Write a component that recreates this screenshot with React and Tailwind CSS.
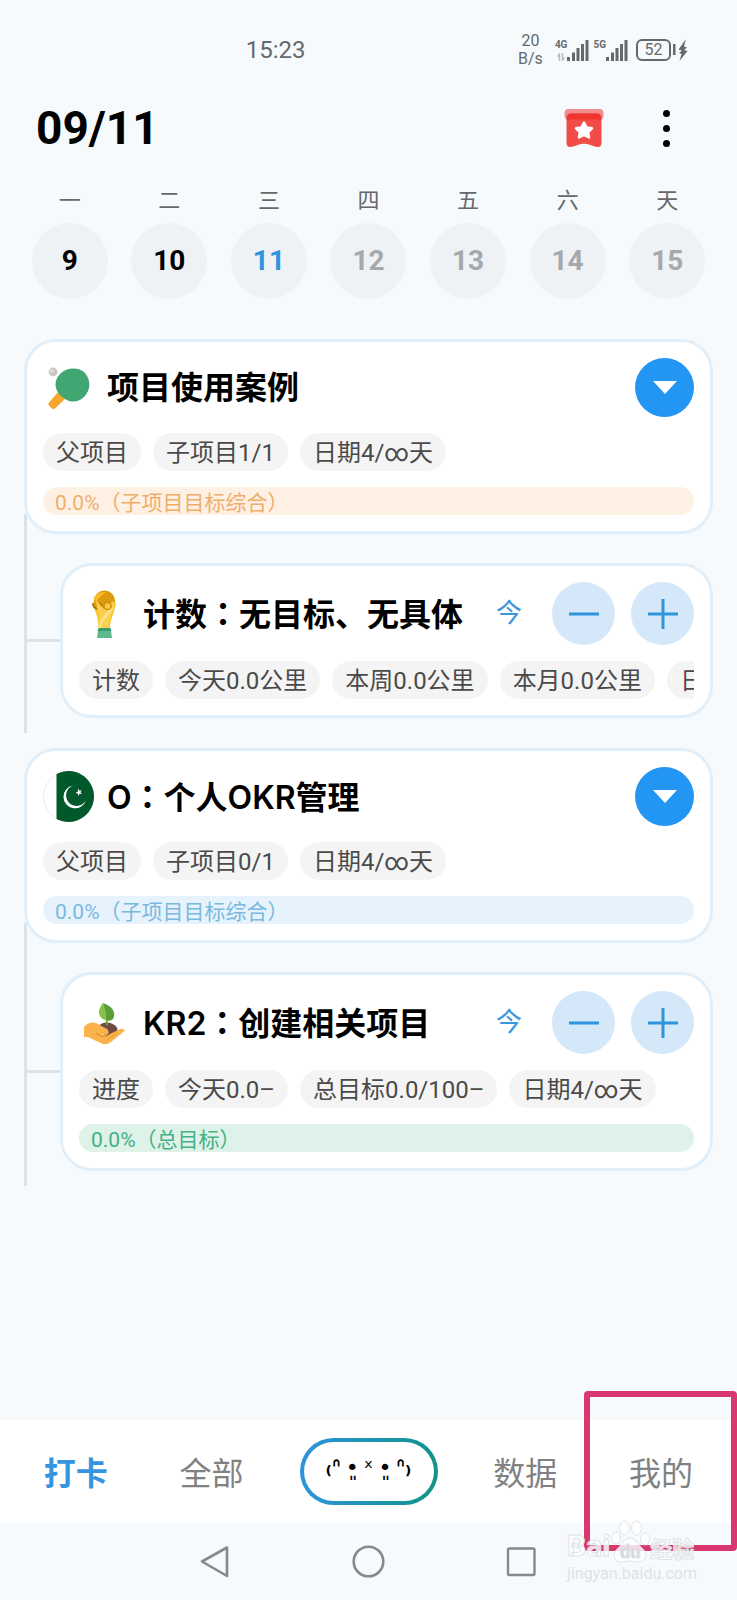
import React from "react";

const WEEK = [
  { label: "一", day: 9, tone: "text-black" },
  { label: "二", day: 10, tone: "text-black" },
  { label: "三", day: 11, tone: "text-[#2f93de]" },
  { label: "四", day: 12, tone: "text-[#a6a9ac]" },
  { label: "五", day: 13, tone: "text-[#a6a9ac]" },
  { label: "六", day: 14, tone: "text-[#a6a9ac]" },
  { label: "天", day: 15, tone: "text-[#a6a9ac]" },
];

const GROUPS = [
  {
    parent: {
      icon: <PaddleIcon />,
      title: "项目使用案例",
      tags: ["父项目", "子项目1/1", "日期4/∞天"],
      progress: { text: "0.0%（子项目目标综合）", style: "bg-[#fef1e4] text-[#eeae6b]" },
    },
    child: {
      icon: <TrophyIcon />,
      title: "计数：无目标、无具体",
      tags: ["计数", "今天0.0公里", "本周0.0公里", "本月0.0公里", "日期4/∞天"],
    },
  },
  {
    parent: {
      icon: <FlagIcon />,
      title: "O：个人OKR管理",
      tags: ["父项目", "子项目0/1", "日期4/∞天"],
      progress: { text: "0.0%（子项目目标综合）", style: "bg-[#e6f3fd] text-[#7ab9de]" },
    },
    child: {
      icon: <SproutIcon />,
      title: "KR2：创建相关项目",
      tags: ["进度", "今天0.0–", "总目标0.0/100–", "日期4/∞天"],
      progress: { text: "0.0%（总目标）", style: "bg-[#dff2e9] text-[#43b184]" },
    },
  },
];

function PaddleIcon() {
  return (
    <svg viewBox="0 0 51 51" className="w-full h-full" aria-hidden="true">
      <circle cx="10" cy="10" r="4.400" fill="#c9c4c2" />
      <circle cx="9" cy="9" r="2.200" fill="#dedad8" />
      <path d="M16 29l7 7-11 10.500q-1.500 1.500-3 0l-3-3q-1.500-1.500 0-3z" fill="#f6a62f" />
      <path d="M17 33C11 27 11 18 17 12C24 5 36 5 42 11C48 18 48 28 41 35C36 40 28 41 23 37.500C21 36 19 35 17 33z" fill="#42a673" />
    </svg>
  );
}

function TrophyIcon() {
  return (
    <svg viewBox="0 0 51 51" className="w-full h-full" aria-hidden="true">
      <path d="M19 43h13l1 7H18z" fill="#5dbb8b" />
      <path d="M18.500 43h14l-1-3h-12z" fill="#3c9b6e" />
      <path d="M14 17C17 26 20 30 19 40H31C31 32 35 26 37 16L34 9H16z" fill="#fcc62d" />
      <circle cx="25.500" cy="13" r="10.500" fill="#dd9a0c" />
      <path d="M15 10Q18 3 27 4Q22 7 17 14z" fill="#f9bd25" />
      <path d="M14 15q0 5 5 6l4-1-2-5" fill="none" stroke="#a8760c" strokeWidth="2" />
      <path d="M17 12l8 9 9-8 2 3c-2 8-6 12-6 24H21c1-10 0-14-3-20z" fill="#fbcf52" />
      <path d="M35 19c-3 7-11 11-13 21h-3c1-10 8-12 11-19z" fill="#fde28b" />
      <circle cx="28.500" cy="18" r="3.600" fill="#fbc93b" stroke="#c98d12" strokeWidth="1.500" />
    </svg>
  );
}

function FlagIcon() {
  return (
    <svg viewBox="0 0 51 51" className="w-full h-full" aria-hidden="true">
      <circle cx="25.500" cy="25.500" r="25" fill="#fff" stroke="#eceeed" strokeWidth="1" />
      <path d="M13.500 3A25.500 25.500 0 1 1 13.500 48z" fill="#01582b" />
      <path d="M30 14.500A11.500 11.500 0 1 0 43 29A10.500 10.500 0 1 1 30 14.500z" fill="#fff" />
      <path d="M35.500 17.500l.9 2.300 2.500-.6-1.500 2 1.600 1.900-2.400-.4-1.200 2.200-.5-2.400-2.500-.5 2.200-1.200z" fill="#fff" />
    </svg>
  );
}

function SproutIcon() {
  return (
    <svg viewBox="0 0 51 51" className="w-full h-full" aria-hidden="true">
      <path d="M18 31q3-5 9-5.500 7 0 11 5l1 5-11 5z" fill="#6d4b42" />
      <path d="M27.500 18l.5 10.500" stroke="#6aa839" strokeWidth="1.800" />
      <path d="M24 6C35 10 37 17 34 22Q31 25 27 23z" fill="#5a9e35" />
      <path d="M24 6C17 14 20 22 27 23Q28 15 24 6z" fill="#83c14b" />
      <path d="M5 30Q10 24 17 26l11 6q4 4-1 6l-6-1q6 3 10 0l10-5q3-1 5 1.500L32 45q-4 3-8 2l-11-5q-5-3-8-2z" fill="#fcb24a" />
      <path d="M17 36q6 5 13 2" fill="none" stroke="#e0902a" strokeWidth="1.300" />
      <path d="M28 43l10-7" stroke="#eea03c" strokeWidth="1.200" />
    </svg>
  );
}

function BookmarkIcon() {
  return (
    <svg viewBox="0 0 40 40" className="w-10 h-10" aria-hidden="true">
      <rect x="0.500" y="1" width="39" height="10.500" rx="4" fill="#f18d8d" />
      <path d="M7 5.500h26q4.500 0 4.500 5V35q0 4.500-4.500 4-5-1.500-8-2.500-5-1.500-10 0-4 1.500-8 2.500-4.500.5-4.500-4V10.500q0-5 4.500-5z" fill="#f24c48" />
      <path d="M7 5.500h26q4.500 0 4.500 6H2.500q0-6 4.500-6z" fill="#ee3530" />
      <path d="M20 14.500l2.600 5 5.400.8-3.800 3.900.8 5.300-5-2.500-5 2.500.8-5.300-3.800-3.900 5.400-.8z" fill="#fff" stroke="#fff" strokeWidth="2.500" strokeLinejoin="round" />
    </svg>
  );
}

function SignalBars() {
  return (
    <svg viewBox="0 0 22 21" className="w-[22px] h-[21px]" fill="#66696c" aria-hidden="true">
      <rect x="0" y="17" width="3" height="4" />
      <rect x="5" y="12.500" width="3" height="8.500" />
      <rect x="9.500" y="8" width="3" height="13" />
      <rect x="14" y="4" width="3" height="17" />
      <rect x="18.500" y="0" width="3" height="21" />
    </svg>
  );
}

// Full-width colons and brackets sit in the middle of their box in the TC face.
function Label({ children }) {
  return children.split(/([：（）])/).map((part, i) =>
    /^[：（）]$/.test(part) ? (
      <span key={i} className="font-['Noto_Sans_CJK_TC',sans-serif]">{part}</span>
    ) : (
      part
    )
  );
}

function StatusBar() {
  return (
    <div className="flex items-center h-[100px] text-[#66696c]">
      <div className="w-1/3" />
      <span className="text-2xl">15:23</span>
      <div className="ml-auto mr-12 flex items-center">
        <div className="mr-3 text-base leading-[18px] text-center">
          <div>20</div>
          <div>B/s</div>
        </div>
        <div className="flex flex-col items-center text-[10px] leading-[10px] font-bold h-[21px]">
          4G
          <svg viewBox="0 0 8 8" className="w-2 h-2 mt-[3px]" fill="none" stroke="#b9bcbf" strokeWidth="1.500" aria-hidden="true">
            <path d="M2.500 8V1L.5 3.500M5.500 0v7l2-2.500" />
          </svg>
        </div>
        <SignalBars />
        <div className="ml-1 text-[10px] leading-[10px] font-bold h-[21px]">5G</div>
        <SignalBars />
        <div className="ml-2 w-[35px] h-[22px] flex items-center justify-center border-2 border-[#66696c] rounded-md text-base">
          52
        </div>
        <svg viewBox="0 0 18 24" className="w-[18px] h-6" fill="#66696c" aria-hidden="true">
          <rect x="2" y="6" width="2.500" height="11" />
          <path d="M15 1L7.500 11.500l3.500 1-3 2.500 2.500 1-2 7 8-10-3.500-1 3-2.500-3-1z" />
        </svg>
      </div>
    </div>
  );
}

function Header() {
  return (
    <header className="flex items-center h-14 pl-9 pr-[55px]">
      <h1 className="text-[46px] font-bold text-black">09/11</h1>
      <button type="button" aria-label="收藏" className="ml-auto">
        <BookmarkIcon />
      </button>
      <button type="button" aria-label="更多" className="ml-[46px] w-8 h-10 flex flex-col items-center justify-center gap-2">
        <span className="w-[7px] h-[7px] rounded-full bg-black" />
        <span className="w-[7px] h-[7px] rounded-full bg-black" />
        <span className="w-[7px] h-[7px] rounded-full bg-black" />
      </button>
    </header>
  );
}

function Week() {
  return (
    <div className="grid grid-cols-7 mt-[31px] px-5">
      {WEEK.map(({ label, day, tone }) => (
        <div key={day} className="flex flex-col items-center gap-2">
          <span className="text-[22px] leading-7 text-[#66696c]">{label}</span>
          <button type="button" className={`w-[76px] h-[76px] rounded-full bg-[#eef2f5] text-[28px] font-bold ${tone}`}>
            {day}
          </button>
        </div>
      ))}
    </div>
  );
}

function Tags({ items }) {
  return (
    <div className="flex gap-3 overflow-hidden">
      {items.map((item) => (
        <span key={item} className="shrink-0 h-[38px] px-[13px] rounded-full bg-[#f4f4f4] text-2xl leading-10 text-[#4a4a4a] whitespace-nowrap">
          {item}
        </span>
      ))}
    </div>
  );
}

function Card({ item, children }) {
  return (
    <section className="relative flex-1 min-w-0 flex flex-col gap-4 p-4 bg-white border-3 border-[#e0eff9] rounded-[32px]">
      <div className="flex items-center gap-4">
        <div className="flex-1 min-w-0 flex items-center gap-[13px]">
          <div className="w-[51px] h-[51px] shrink-0">{item.icon}</div>
          <h2 className="font-['Inter','Noto_Sans_CJK_SC',sans-serif] text-[32px] leading-10 font-semibold text-black whitespace-nowrap">
            <Label>{item.title}</Label>
          </h2>
        </div>
        {children}
      </div>
      <Tags items={item.tags} />
      {item.progress && (
        <div className={`h-7 px-3 rounded-full text-[21px] leading-7 ${item.progress.style}`}>
          <Label>{item.progress.text}</Label>
        </div>
      )}
    </section>
  );
}

function RoundButton({ label, d }) {
  return (
    <button type="button" aria-label={label} className="w-[63px] h-[63px] rounded-full bg-[#d4e8f9] flex items-center justify-center">
      <svg viewBox="0 0 30 30" className="w-[30px] h-[30px]" stroke="#2f93de" strokeWidth="3" aria-hidden="true">
        <path d={d} />
      </svg>
    </button>
  );
}

function Group({ parent, child }) {
  return (
    <div>
      <Card item={parent}>
        <button type="button" aria-label="展开" className="w-[59px] h-[59px] rounded-full bg-[#2395f3] flex items-center justify-center">
          <svg viewBox="0 0 24 13" className="w-6 h-[13px]" fill="#fff" aria-hidden="true">
            <path d="M0 0h24L12 13z" />
          </svg>
        </button>
      </Card>
      <div className="flex items-center -mt-5 pt-[49px] pb-[15px] border-l-3 border-[#dde2e6]">
        <div className="w-[33px] h-[3px] bg-[#dde2e6]" />
        <Card item={child}>
          <span className="mr-[14px] text-[26px] text-[#3b96dd]">今</span>
          <RoundButton label="减少" d="M0 15h30" />
          <RoundButton label="增加" d="M0 15h30M15 0v30" />
        </Card>
      </div>
    </div>
  );
}

function Tab({ children, active }) {
  return (
    <button type="button" className={`flex-1 pt-1 text-[32px] ${active ? "font-bold text-[#3594e0]" : "text-[#7f8183]"}`}>
      {children}
    </button>
  );
}

function TabBar() {
  return (
    <nav className="flex items-center h-[103px] px-2 bg-white">
      <Tab active>打卡</Tab>
      <Tab>全部</Tab>
      <button type="button" className="mx-5 w-[138px] h-[67px] p-1 rounded-full bg-linear-to-r from-[#2f93dc] to-[#12938a]">
        <span className="flex items-center justify-center gap-[5px] pb-2 w-full h-full rounded-full bg-white font-['DejaVu_Sans',sans-serif] text-[22px] font-bold text-black whitespace-nowrap">
          <span>₍ᐢ</span>
          <span className="font-normal">•͈</span>
          <span className="font-normal">ˣ</span>
          <span className="font-normal">•͈</span>
          <span>ᐢ₎</span>
        </span>
      </button>
      <Tab>数据</Tab>
      <Tab>我的</Tab>
    </nav>
  );
}

function SystemBar() {
  return (
    <div className="flex items-center justify-center gap-[117px] h-[77px]">
      <button type="button" aria-label="返回">
        <svg viewBox="0 0 36 36" className="w-9 h-9" fill="none" stroke="#86898c" strokeWidth="2.600" strokeLinejoin="round" aria-hidden="true">
          <path d="M4 17.500L29 3.500v28.500z" />
        </svg>
      </button>
      <button type="button" aria-label="主页">
        <svg viewBox="0 0 36 36" className="w-9 h-9" fill="none" stroke="#86898c" strokeWidth="2.600" aria-hidden="true">
          <circle cx="17.500" cy="17.500" r="14.800" />
        </svg>
      </button>
      <button type="button" aria-label="最近">
        <svg viewBox="0 0 36 36" className="w-9 h-9" fill="none" stroke="#86898c" strokeWidth="2.400" aria-hidden="true">
          <rect x="4" y="4.500" width="26.500" height="26.500" rx="1.500" />
        </svg>
      </button>
    </div>
  );
}

function Watermark() {
  return (
    <div className="absolute right-10 bottom-4 text-white/80 pointer-events-none">
      <div className="flex items-end leading-7 font-bold [-webkit-text-stroke:1px_#e0e3e7]">
        <span className="text-3xl">Bai</span>
        <svg viewBox="0 0 40 44" className="w-10 h-11" fill="#fff" fillOpacity="0.800" stroke="#e0e3e7" strokeWidth="1" aria-hidden="true">
          <ellipse cx="6" cy="18" rx="4.500" ry="6" />
          <ellipse cx="14.500" cy="8" rx="5" ry="7" />
          <ellipse cx="26.500" cy="8" rx="5" ry="7" />
          <ellipse cx="35" cy="19" rx="4.500" ry="6" />
          <path d="M20 18c6 0 8 7 13 11 5 5 3 13-4 13-4 0-6-1-9-1s-5 1-9 1c-7 0-9-8-4-13 5-4 7-11 13-11z" />
          <text x="10" y="38" fontSize="18" fill="#cfd3d8" fillOpacity="1" className="[-webkit-text-stroke:0px]">du</text>
        </svg>
        <span className="text-[22px]">经验</span>
      </div>
      <div className="text-base leading-5 text-[#dfe2e6]">jingyan.baidu.com</div>
    </div>
  );
}

export default function App() {
  return (
    <div className="min-h-screen flex flex-col bg-[#f6fafd] font-['Roboto','Noto_Sans_CJK_SC',sans-serif]">
      <StatusBar />
      <Header />
      <Week />
      <main className="flex flex-col gap-[15px] mt-10 px-6">
        {GROUPS.map((group) => (
          <Group key={group.parent.title} parent={group.parent} child={group.child} />
        ))}
      </main>
      <footer className="relative mt-auto">
        <TabBar />
        <SystemBar />
        <div className="absolute right-0 -top-[29px] w-[153px] h-40 border-6 border-[#d8376f] rounded-sm pointer-events-none" />
        <Watermark />
      </footer>
    </div>
  );
}
